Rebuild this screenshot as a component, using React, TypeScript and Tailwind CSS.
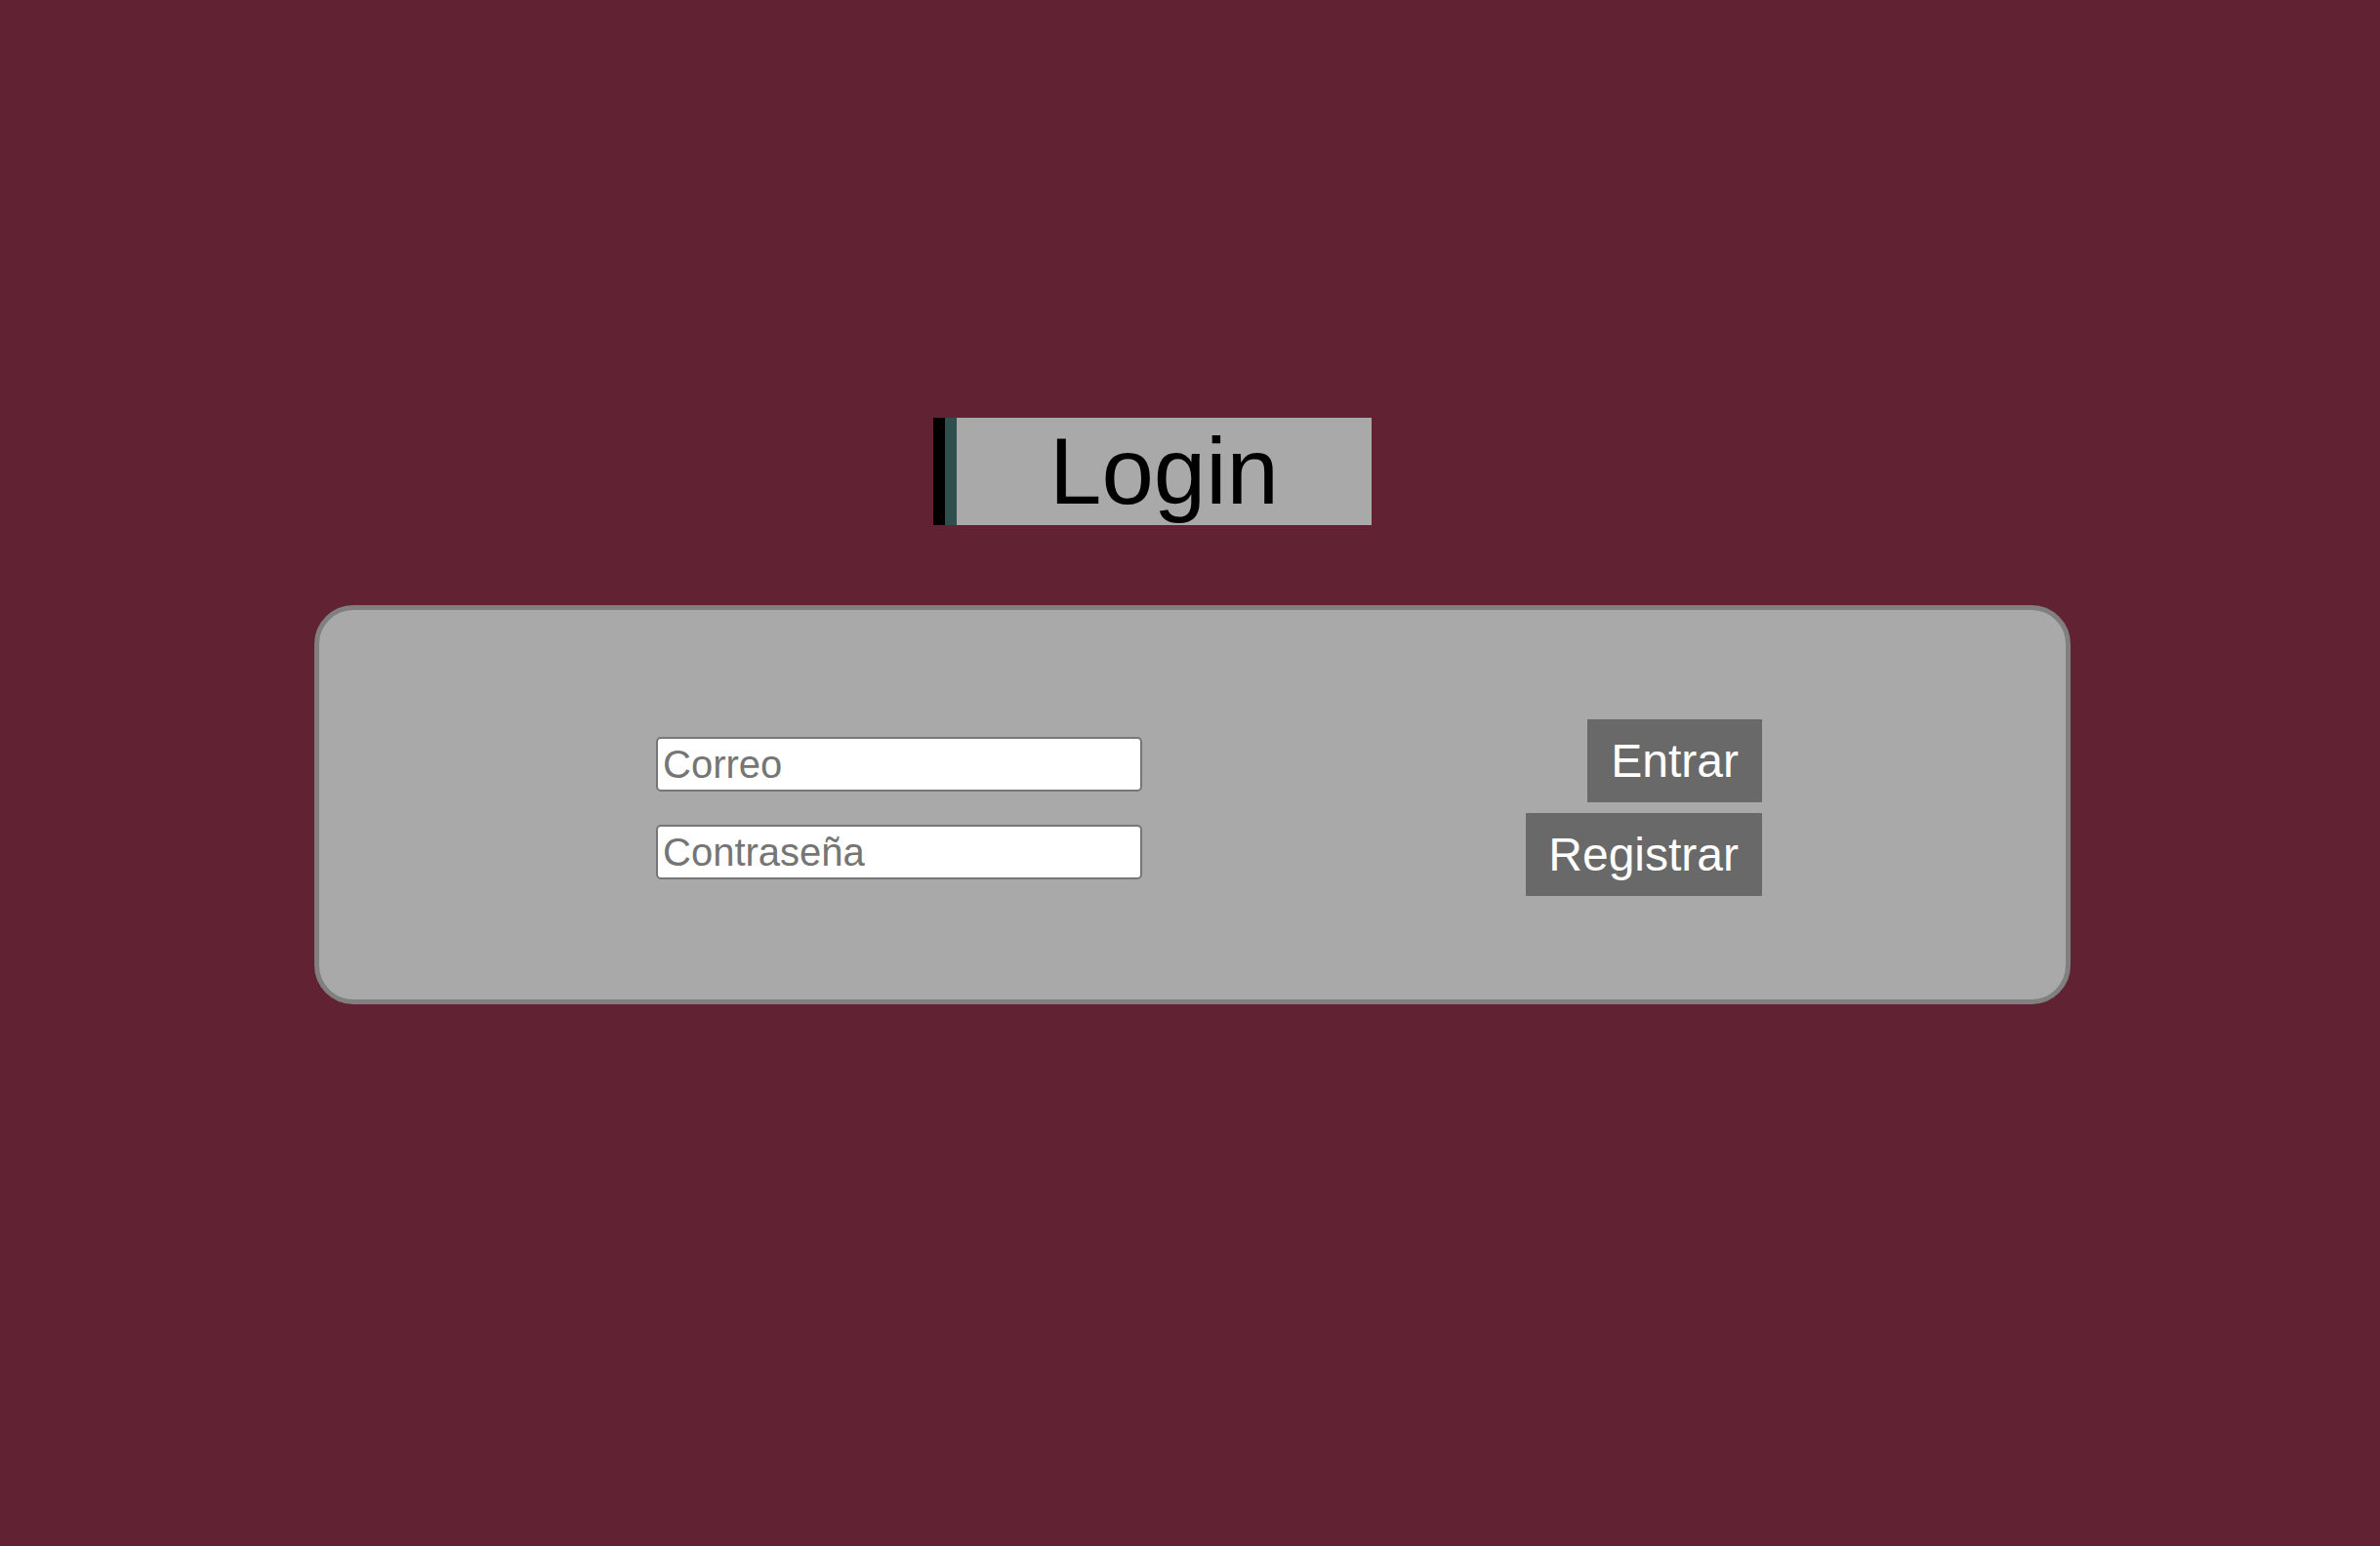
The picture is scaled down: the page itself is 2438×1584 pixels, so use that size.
export default function App() {
  return (
    <div className="min-h-screen w-full bg-[#612333] pt-[428px] font-['Liberation_Sans',Arial,sans-serif]">
      <div className="ml-[956px] flex h-[110px] w-[449px] border-l-[12px] border-black">
        <div className="w-[12px] bg-[#2f4f4f]" />
        <h1 className="flex flex-1 items-center justify-center bg-[#a9a9a9] text-[96px] leading-none text-black">
          Login
        </h1>
      </div>

      <div className="ml-[322px] mt-[82px] flex h-[409px] w-[1799px] items-center justify-between rounded-[40px] border-[5px] border-[#808080] bg-[#a9a9a9] pl-[345px] pr-[311px] pt-[6px]">
        <div className="flex flex-col gap-[34px]">
          <input
            type="email"
            placeholder="Correo"
            className="h-[56px] w-[498px] rounded-[5px] border-2 border-[#767676] bg-white px-[5px] text-[40px] text-black placeholder:text-[#757575] outline-none"
          />
          <input
            type="password"
            placeholder="Contraseña"
            className="h-[56px] w-[498px] rounded-[5px] border-2 border-[#767676] bg-white px-[5px] text-[40px] text-black placeholder:text-[#757575] outline-none"
          />
        </div>
        <div className="flex flex-col items-end gap-[11px]">
          <button className="h-[85px] bg-[#696969] pl-[24px] pr-[24px] text-[48px] text-white">Entrar</button>
          <button className="h-[85px] bg-[#696969] pl-[23px] pr-[24px] text-[48px] text-white">Registrar</button>
        </div>
      </div>
    </div>
  );
}
